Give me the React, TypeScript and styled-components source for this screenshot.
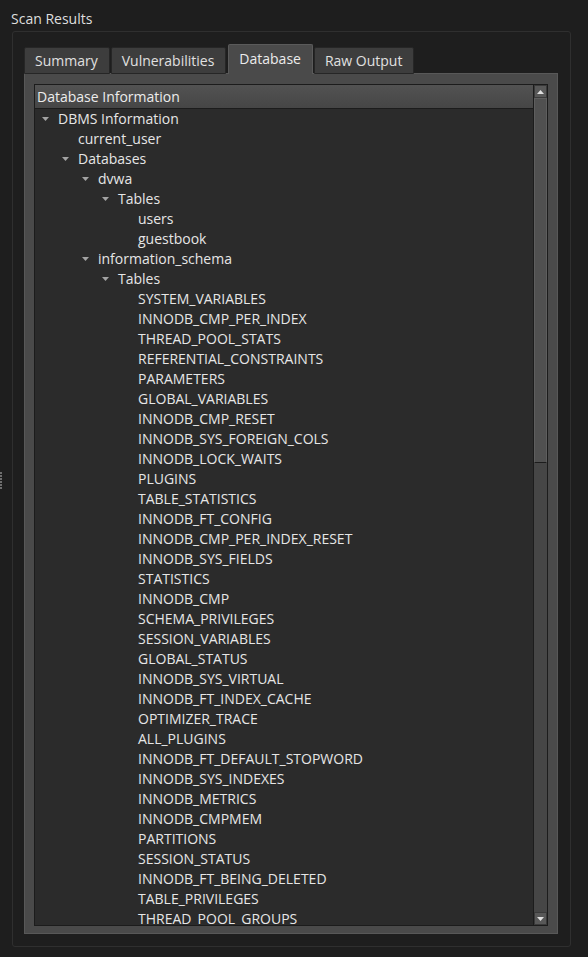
import styled, { createGlobalStyle } from 'styled-components';

const GlobalStyle = createGlobalStyle`
  html, body {
    margin: 0;
    padding: 0;
    background: #1e1e1e;
  }
  body {
    font-family: 'Open Sans', 'Noto Sans', sans-serif;
    font-size: 14px;
    color: #e4e4e4;
  }
`;

interface TreeNode {
  label: string;
  children?: TreeNode[];
}

const schemaTables = [
  'SYSTEM_VARIABLES',
  'INNODB_CMP_PER_INDEX',
  'THREAD_POOL_STATS',
  'REFERENTIAL_CONSTRAINTS',
  'PARAMETERS',
  'GLOBAL_VARIABLES',
  'INNODB_CMP_RESET',
  'INNODB_SYS_FOREIGN_COLS',
  'INNODB_LOCK_WAITS',
  'PLUGINS',
  'TABLE_STATISTICS',
  'INNODB_FT_CONFIG',
  'INNODB_CMP_PER_INDEX_RESET',
  'INNODB_SYS_FIELDS',
  'STATISTICS',
  'INNODB_CMP',
  'SCHEMA_PRIVILEGES',
  'SESSION_VARIABLES',
  'GLOBAL_STATUS',
  'INNODB_SYS_VIRTUAL',
  'INNODB_FT_INDEX_CACHE',
  'OPTIMIZER_TRACE',
  'ALL_PLUGINS',
  'INNODB_FT_DEFAULT_STOPWORD',
  'INNODB_SYS_INDEXES',
  'INNODB_METRICS',
  'INNODB_CMPMEM',
  'PARTITIONS',
  'SESSION_STATUS',
  'INNODB_FT_BEING_DELETED',
  'TABLE_PRIVILEGES',
  'THREAD_POOL_GROUPS',
];

const tree: TreeNode = {
  label: 'DBMS Information',
  children: [
    { label: 'current_user' },
    {
      label: 'Databases',
      children: [
        {
          label: 'dvwa',
          children: [
            { label: 'Tables', children: [{ label: 'users' }, { label: 'guestbook' }] },
          ],
        },
        {
          label: 'information_schema',
          children: [
            { label: 'Tables', children: schemaTables.map((t) => ({ label: t })) },
          ],
        },
      ],
    },
  ],
};

const flatten = (node: TreeNode, level: number, out: { node: TreeNode; level: number }[]) => {
  out.push({ node, level });
  node.children?.forEach((c) => flatten(c, level + 1, out));
  return out;
};

const tabs = ['Summary', 'Vulnerabilities', 'Database', 'Raw Output'];

const App = () => {
  const rows = flatten(tree, 0, []);
  return (
    <Page>
      <GlobalStyle />
      <Grip>
        {Array.from({ length: 6 }).map((_, i) => (
          <GripDot key={i} />
        ))}
      </Grip>
      <Main>
        <Title>Scan Results</Title>
        <GroupBox>
          <TabBar>
            {tabs.map((t) => (
              <Tab key={t} $active={t === 'Database'}>
                {t}
              </Tab>
            ))}
          </TabBar>
          <Pane>
            <Tree>
              <TreeContent>
                <Header>Database Information</Header>
                <Body>
                  {rows.map(({ node, level }, i) => (
                    <Row key={node.label + i} $level={level}>
                      <Branch>
                        {node.children && (
                          <svg width="7" height="4" viewBox="0 0 7 4">
                            <polygon points="0,0 7,0 3.5,4" fill="#a3a3a3" />
                          </svg>
                        )}
                      </Branch>
                      {node.label}
                    </Row>
                  ))}
                </Body>
              </TreeContent>
              <ScrollBar>
                <ScrollButton>
                  <svg width="7" height="4" viewBox="0 0 7 4">
                    <polygon points="0,4 7,4 3.5,0" fill="#e0e0e0" />
                  </svg>
                </ScrollButton>
                <Handle style={{ height: 365 }} />
                <Track />
                <ScrollButton>
                  <svg width="7" height="4" viewBox="0 0 7 4">
                    <polygon points="0,0 7,0 3.5,4" fill="#e0e0e0" />
                  </svg>
                </ScrollButton>
              </ScrollBar>
            </Tree>
          </Pane>
        </GroupBox>
      </Main>
    </Page>
  );
};

export default App;

const Page = styled.div`
  display: flex;
  width: 588px;
  height: 957px;
  overflow: hidden;
`;

const Grip = styled.div`
  width: 3px;
  display: flex;
  flex-direction: column;
  justify-content: center;
  gap: 1px;
  padding-top: 4px;
`;

const GripDot = styled.div`
  width: 2px;
  height: 2px;
  background: #6e6e6e;
`;

const Main = styled.div`
  flex: 1;
  min-height: 0;
  display: flex;
  flex-direction: column;
  padding: 9px 17px 10px 9px;
`;

const Title = styled.div`
  height: 20px;
  line-height: 20px;
  margin-left: -1px;
  color: #dedede;
  margin-bottom: 2px;
`;

const GroupBox = styled.div`
  flex: 1;
  min-height: 0;
  display: flex;
  flex-direction: column;
  border: 1px solid #2f2f2f;
  border-radius: 3px;
  padding: 12px 12px 12px 11px;
`;

const TabBar = styled.div`
  display: flex;
  align-items: flex-end;
  height: 30px;
  gap: 1px;
  position: relative;
  z-index: 1;
  margin-bottom: -1px;
`;

const Tab = styled.div<{ $active?: boolean }>`
  height: ${({ $active }) => ($active ? '30px' : '27px')};
  box-sizing: border-box;
  padding: ${({ $active }) => ($active ? '0 11px 2px 10px' : '0 11px 0 10px')};
  display: flex;
  align-items: center;
  background: ${({ $active }) => ($active ? '#4a4a4a' : '#3d3d3d')};
  border: 1px solid ${({ $active }) => ($active ? '#5a5a5a' : '#262626')};
  border-bottom: ${({ $active }) => ($active ? 'none' : '1px solid #262626')};
  border-radius: 2px 2px 0 0;
  color: ${({ $active }) => ($active ? '#ececec' : '#e0e0e0')};
  margin-left: ${({ $active }) => ($active ? '1px' : '0')};
`;

const Pane = styled.div`
  flex: 1;
  min-height: 0;
  display: flex;
  background: #4a4a4a;
  border: 1px solid #585858;
  padding: 10px 9px 7px 9px;
`;

const Tree = styled.div`
  flex: 1;
  min-height: 0;
  display: flex;
  border: 1px solid #1c1c1c;
  background: #2b2b2b;
  overflow: hidden;
`;

const TreeContent = styled.div`
  flex: 1;
  min-height: 0;
  display: flex;
  flex-direction: column;
  min-width: 0;
`;

const Header = styled.div`
  height: 23px;
  line-height: 23px;
  padding-left: 2px;
  background: linear-gradient(#525252, #464646);
  border-bottom: 1px solid #1c1c1c;
  color: #ececec;
`;

const Body = styled.div`
  flex: 1;
  min-height: 0;
  overflow: hidden;
`;

const Row = styled.div<{ $level: number }>`
  height: 20px;
  box-sizing: border-box;
  padding-bottom: 1px;
  display: flex;
  align-items: center;
  padding-left: ${({ $level }) => $level * 20}px;
  color: #e6e6e6;
  white-space: nowrap;
`;

const Branch = styled.div`
  width: 23px;
  flex-shrink: 0;
  display: flex;
  align-items: center;
  padding-top: 1px;
  padding-left: 7px;
  box-sizing: border-box;
`;

const ScrollBar = styled.div`
  width: 13px;
  display: flex;
  flex-direction: column;
  background: #464646;
  border-left: 1px solid #1c1c1c;
`;

const ScrollButton = styled.div`
  height: 13px;
  flex-shrink: 0;
  box-sizing: border-box;
  display: flex;
  align-items: center;
  justify-content: center;
  background: #585858;
  border: 1px solid #3a3a3a;
`;

const Handle = styled.div`
  box-sizing: border-box;
  flex-shrink: 0;
  background: #505050;
  border: 1px solid #5e5e5e;
  border-bottom: 1px solid #1c1c1c;
`;

const Track = styled.div`
  flex: 1;
  background: #464646;
`;
